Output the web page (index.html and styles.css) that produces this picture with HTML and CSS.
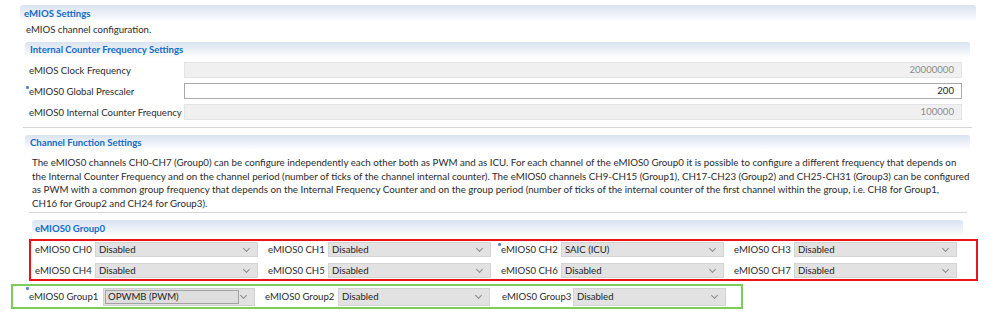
FILE: index.html
```html
<!DOCTYPE html>
<html>
<head>
<meta charset="utf-8">
<link rel="stylesheet" href="styles.css">
</head>
<body>
<div class="page">
  <section class="outer">
    <div class="hdr hdr-outer">eMIOS Settings</div>
    <div class="desc">eMIOS channel configuration.</div>

    <section class="sub freq">
      <div class="hdr hdr-sub">Internal Counter Frequency Settings</div>
      <div class="frow"><span class="flabel">eMIOS Clock Frequency</span><div class="inp dis">20000000</div></div>
      <div class="frow"><span class="flabel mark">eMIOS0 Global Prescaler</span><div class="inp act">200</div></div>
      <div class="frow"><span class="flabel">eMIOS0 Internal Counter Frequency</span><div class="inp dis">100000</div></div>
    </section>
    <div class="sep sep1"></div>

    <section class="sub chan">
      <div class="hdr hdr-chan">Channel Function Settings</div>
      <p class="para">The eMIOS0 channels CH0-CH7 (Group0) can be configure independently each other both as PWM and as ICU. For each channel of the eMIOS0 Group0 it is possible to configure a different frequency that depends on the Internal Counter Frequency and on the channel period (number of ticks of the channel internal counter). The eMIOS0 channels CH9-CH15 (Group1), CH17-CH23 (Group2) and CH25-CH31 (Group3) can be configured<br>as PWM with a common group frequency that depends on the Internal Frequency Counter and on the group period (number of ticks of the internal counter of the first channel within the group, i.e. CH8 for Group1,<br>CH16 for Group2 and CH24 for Group3).</p>
    </section>
    <div class="sep sep2"></div>

    <div class="hdr hdr-group">eMIOS0 Group0</div>
  </section>

  <div class="redbox">
    <div class="cell"><span class="clabel">eMIOS0 CH0</span><div class="sel">Disabled</div></div>
    <div class="cell"><span class="clabel">eMIOS0 CH1</span><div class="sel">Disabled</div></div>
    <div class="cell"><span class="clabel mark">eMIOS0 CH2</span><div class="sel">SAIC (ICU)</div></div>
    <div class="cell"><span class="clabel">eMIOS0 CH3</span><div class="sel">Disabled</div></div>
    <div class="cell"><span class="clabel">eMIOS0 CH4</span><div class="sel">Disabled</div></div>
    <div class="cell"><span class="clabel">eMIOS0 CH5</span><div class="sel">Disabled</div></div>
    <div class="cell"><span class="clabel">eMIOS0 CH6</span><div class="sel">Disabled</div></div>
    <div class="cell"><span class="clabel">eMIOS0 CH7</span><div class="sel">Disabled</div></div>
  </div>

  <div class="greenbox">
    <span class="glabel g1 mark">eMIOS0 Group1</span><div class="sel gsel focus"><span class="fval">OPWMB (PWM)</span></div>
    <span class="glabel g2">eMIOS0 Group2</span><div class="sel gsel">Disabled</div>
    <span class="glabel g3">eMIOS0 Group3</span><div class="sel gsel g3sel">Disabled</div>
  </div>
</div>
</body>
</html>
```

FILE: styles.css
```css
* { box-sizing: border-box; }
html, body { margin: 0; padding: 0; background: #fff; }
body {
  font-family: "Lato", "Open Sans", sans-serif;
  font-size: 9.6px;
  color: #2b2b2b;
}
.page { padding-top: 5px; width: 999px; height: 316px; overflow: hidden; }

.outer { margin-left: 20px; width: 956px; }

.hdr {
  background: linear-gradient(to bottom, #d9e3f0 0%, #eef2f8 55%, #ffffff 100%);
  color: #136cc9;
  font-weight: 700;
  border-radius: 3px 3px 0 0;
  white-space: nowrap;
}
.hdr-outer { height: 17px; line-height: 17px; padding-left: 4px; }
.desc { height: 14px; line-height: 14px; margin-top: 1px; padding-left: 6px; }

.sub { margin-left: 5px; width: 945px; }
.freq { margin-top: 5px; }
.hdr-sub { height: 16px; line-height: 16px; padding-left: 5px; }

.frow { display: flex; align-items: center; height: 16px; margin-top: 5px; }
.hdr-sub + .frow { margin-top: 4px; }
.flabel { width: 159px; padding-left: 4px; position: relative; white-space: nowrap; }
.inp {
  width: 778px; height: 16px; line-height: 14px;
  text-align: right; padding-right: 7px;
}
.dis { background: #f0f0f0; border: 1px solid #e4e4e4; color: #8c8c8c; }
.act { background: #fff; border: 1px solid #a9a9a9; color: #1e1e1e; }

.sep { height: 1px; background: #d6d6d6; }
.sep1 { margin-top: 7px; margin-left: 3px; width: 949px; }
.sep2 { margin-top: 2px; margin-left: 9px; width: 938px; }

.chan { margin-top: 7px; }
.hdr-chan { height: 15px; line-height: 15px; padding-left: 5px; }
.para {
  margin: 6px 0 0 0;
  padding-left: 7px;
  width: 945px;
  font-size: 9.75px;
  line-height: 13.6px;
}

.hdr-group { margin: 7px 0 0 12px; width: 931px; height: 17px; line-height: 17px; padding-left: 3px; }

.redbox {
  margin: 2px 0 0 29px;
  width: 949px; height: 42px;
  border: 2px solid #e8141c;
  padding: 1px 0 0 4px;
  display: grid;
  grid-template-columns: repeat(4, 223px);
  column-gap: 10px;
  row-gap: 5px;
}
.cell { display: flex; align-items: center; height: 15px; }
.clabel { width: 60px; flex: none; white-space: nowrap; position: relative; }

.sel {
  position: relative;
  width: 163px; height: 15px; line-height: 13px;
  background: #e2e2e2;
  border: 1px solid #d3d3d3;
  padding-left: 3px;
  color: #1e1e1e;
  white-space: nowrap;
}
.sel::after {
  content: "";
  position: absolute;
  right: 8px; top: 50%;
  width: 4px; height: 4px;
  margin-top: -4px;
  border-right: 1px solid #8a8a8a;
  border-bottom: 1px solid #8a8a8a;
  transform: rotate(45deg);
}

.mark::before {
  content: "";
  position: absolute;
  left: -3px; top: -1px;
  width: 3px; height: 3px;
  border-radius: 1px;
  background: #5a88c6;
}
.flabel.mark::before { left: 1px; top: 0; }

.greenbox {
  margin: 3px 0 0 11px;
  width: 732px; height: 25px;
  border: 2px solid #7ccb5b;
  padding: 2px 0 0 16px;
  display: flex;
  align-items: flex-start;
}
.glabel { height: 18px; line-height: 18px; white-space: nowrap; position: relative; flex: none; }
.g1 { width: 74px; }
.g2 { width: 73px; margin-left: 10px; }
.g3 { width: 71px; margin-left: 12px; }
.gsel { width: 152px; height: 18px; line-height: 16px; flex: none; }
.g3sel { width: 153px; }
.focus { padding: 1px 15px 1px 1px; border-color: #cfcfcf; }
.fval {
  display: block; height: 14px; line-height: 12px;
  border: 1px solid #a2a2a2;
  padding-left: 2px;
  background: #dedede;
}
```
